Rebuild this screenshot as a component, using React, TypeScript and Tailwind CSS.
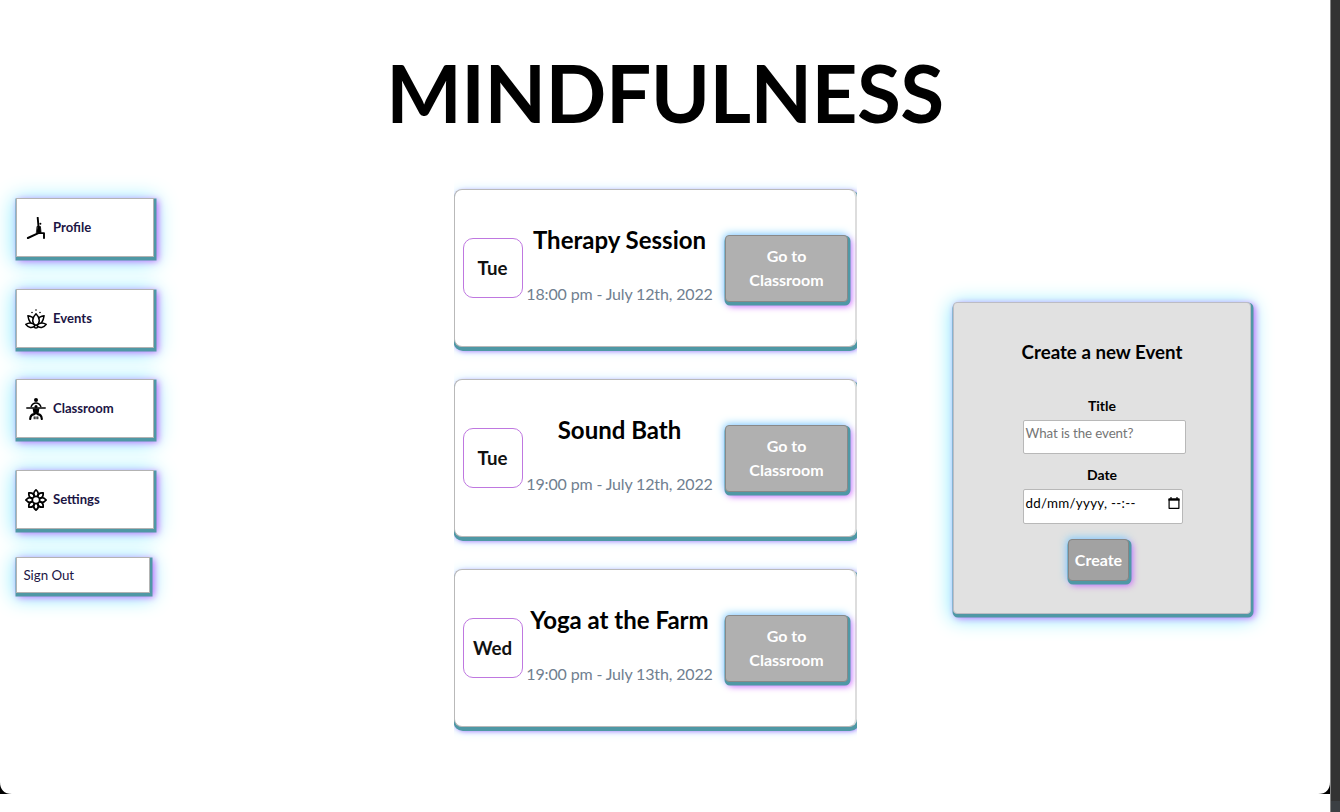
import type { ReactNode } from "react";

const glow =
  "shadow-[1px_2px_0_1.5px_#4f98a5,3px_3px_7px_1px_#c766ff,0_3px_20px_2px_#84ecff]";
const buttonGlow =
  "shadow-[1px_2px_0_1.5px_#4f98a5,-1px_-1px_9px_0px_#78d0ff,3px_4px_7px_0px_#d050ff]";

function ProfileIcon() {
  return (
    <svg viewBox="0 0 22 22" className="h-[22px] w-[22px] shrink-0" fill="none" stroke="#000" strokeLinecap="round" strokeLinejoin="round">
      <path d="M12.7 .7l.8 9" strokeWidth="1.9" />
      <path d="M12.4 9.4h3l.7 6.4h-4.4z" fill="#000" strokeWidth=".8" />
      <circle cx="15.4" cy="6.8" r="1" fill="#000" stroke="none" />
      <path d="M2.9 21l10.5-4.8" strokeWidth="2" />
      <path d="M13.8 16.1h5.2v5" strokeWidth="1.9" />
    </svg>
  );
}

function LotusIcon() {
  return (
    <svg viewBox="0 0 22 22" className="h-[22px] w-[22px] shrink-0" fill="#fff" stroke="#000" strokeWidth="1.5" strokeLinejoin="round">
      <path d="M10.5 18.3C6.6 17 3.7 14 2.9 7.7c3.3.2 5.7 2 7.4 5zM11.5 18.3c3.9-1.3 6.8-4.3 7.6-10.6-3.3.2-5.7 2-7.4 5z" />
      <path d="M11 18.4c-4.4-3.4-4.4-8.3 0-12.6 4.4 4.3 4.4 9.2 0 12.6z" />
      <path d="M10.3 17.6C7.5 14.6 4 14.3.8 16.4c2.4 3.5 6.5 4.2 9.5 1.2zM11.7 17.6c2.8-3 6.3-3.3 9.5-1.2-2.4 3.5-6.5 4.2-9.5 1.2z" />
      <circle cx="11" cy="18.5" r="1.6" />
      <g fill="#000" stroke="none">
        <circle cx="11" cy="2" r=".8" />
        <circle cx="7" cy="4.5" r=".8" />
        <circle cx="15" cy="4.5" r=".8" />
      </g>
    </svg>
  );
}

function ClassroomIcon() {
  return (
    <svg viewBox="0 0 22 22" className="h-[22px] w-[22px] shrink-0" fill="none" stroke="#000" strokeLinecap="round" strokeLinejoin="round">
      <circle cx="11" cy="2.1" r="2" fill="#000" stroke="none" />
      <path d="M1.8 10h18.4" strokeWidth="1.5" />
      <path d="M6.2 8.5c1-2.4 2.6-3.4 4.8-3.4s3.8 1 4.8 3.4" strokeWidth="1.5" />
      <circle cx="11" cy="8.4" r="1.5" fill="#000" stroke="none" />
      <path d="M7.6 10.5h6.8l-1 6H8.600z" fill="#000" stroke="none" />
      <path d="M9 16.3C6.400 16.300 5.400 18 5.200 21M13 16.300c2.600 0 3.600 1.700 3.800 4.700" strokeWidth="2.2" />
      <path d="M9.200 18.800v2M11 18.800v2M12.800 18.800v2" strokeWidth="1.1" />
    </svg>
  );
}

function FlowerIcon() {
  return (
    <svg viewBox="0 0 22 22" className="h-[22px] w-[22px] shrink-0" fill="none" stroke="#000" strokeWidth="1.8" strokeLinejoin="round">
      {[0, 45, 90, 135, 180, 225, 270, 315].map((angle) => (
        <path
          key={angle}
          transform={`rotate(${angle} 11 11)`}
          d="M9.5 7.2C7.8 4.8 8.9 2.6 11 .9c2.1 1.7 3.2 3.9 1.5 6.3"
        />
      ))}
      <circle cx="11" cy="11" r="3.7" />
    </svg>
  );
}

function CalendarIcon() {
  return (
    <svg viewBox="0 0 12 12" className="h-3 w-3" fill="none" stroke="#000">
      <path d="M1.1 2h9.8v9.3H1.1z" strokeWidth="1.2" strokeLinejoin="round" />
      <path d="M.5 2.6h11" strokeWidth="2.2" />
      <path d="M3 0v2M9 0v2" strokeWidth="1.2" />
    </svg>
  );
}

const links: { label: string; icon: ReactNode }[] = [
  { label: "Profile", icon: <ProfileIcon /> },
  { label: "Events", icon: <LotusIcon /> },
  { label: "Classroom", icon: <ClassroomIcon /> },
  { label: "Settings", icon: <FlowerIcon /> },
];

const events = [
  { day: "Tue", title: "Therapy Session", time: "18:00 pm - July 12th, 2022" },
  { day: "Tue", title: "Sound Bath", time: "19:00 pm - July 12th, 2022" },
  { day: "Wed", title: "Yoga at the Farm", time: "19:00 pm - July 13th, 2022" },
];

function Sidebar() {
  return (
    <nav className="mt-[9.5px] ml-4 flex w-[138px] shrink-0 flex-col text-[#1c1544]">
      {links.map(({ label, icon }) => (
        <a
          key={label}
          className={`mb-[31.5px] flex h-[59px] w-[138px] items-center gap-[6px] border border-[#b3b3b3] bg-white pt-[1.5px] pl-2 text-[13.1px] font-bold ${glow}`}
        >
          {icon}
          {label}
        </a>
      ))}
      <button
        className={`-mt-[3px] flex h-9 w-[134px] items-center border border-[#b3b3b3] bg-white pt-[2px] pl-[6.5px] text-[13.33px] tracking-[-0.05px] ${glow}`}
      >
        Sign Out
      </button>
    </nav>
  );
}

function EventCard({ day, title, time }: (typeof events)[number]) {
  return (
    <li className="h-[190px] overflow-x-clip">
      <article className="flex h-[158px] w-[403px] items-center rounded-lg border border-r-2 border-[#b9b9b9] border-r-[#dddddd] bg-white pl-2 shadow-[1px_2.5px_0_1.5px_#4f98a5,2px_3px_5px_1px_#9c70ff,0_2px_12px_1px_#c9f0ff]">
        <div className="flex h-[60px] w-[60px] items-center justify-center rounded-[10px] border border-[#bf78e0] pt-[2px] pr-px text-[18.7px] font-bold text-[#111]">
          {day}
        </div>
        <div className="flex w-[194px] flex-col items-center pr-px pb-1 whitespace-nowrap">
          <h2 className="text-2xl leading-[30px] font-bold">{title}</h2>
          <p className="mt-[27px] text-base leading-6 tracking-[-0.15px] text-[#708090]">{time}</p>
        </div>
        <button
          className={`relative top-px ml-2 h-[67px] w-[123px] shrink-0 rounded border border-[#898989] bg-[#b0b0b0] px-4 pb-[2px] text-base leading-6 font-bold text-white ${buttonGlow}`}
        >
          Go to Classroom
        </button>
      </article>
    </li>
  );
}

function EventForm() {
  return (
    <form
      className={`mt-[113px] ml-[96px] flex h-[312px] w-[298px] shrink-0 flex-col items-center rounded border border-[#bcbcc4] bg-[#e1e1e1] ${glow}`}
    >
      <h3 className="mt-[37px] text-[18.72px] leading-6 font-bold">Create a new Event</h3>
      <label className="mt-[32px] text-[14px] leading-5 font-bold">Title</label>
      <div className="mt-[4px] ml-1 flex h-[34px] w-[163px] rounded-[2px] border border-[#b8b8b8] bg-white pt-[2px] pl-[2px] text-[13.33px] leading-5 tracking-[-0.1px] text-[#757575]">
        What is the event?
      </div>
      <label className="mt-[11px] text-[14px] leading-5 font-bold">Date</label>
      <div className="mt-[4px] ml-[2px] flex h-[35px] w-[160px] justify-between rounded-[2px] border border-[#b8b8b8] bg-white pt-[3px] pr-[2px] pl-[1.5px] text-[13.33px] leading-5">
        <span className="tracking-[0.3px]">dd/mm/yyyy, --:--</span>
        <span className="pt-[4px]">
          <CalendarIcon />
        </span>
      </div>
      <button
        className={`mt-[15px] mr-[7px] h-[42px] w-[61px] rounded border border-[#858585] bg-[#a2a2a2] text-base font-bold text-white ${buttonGlow}`}
      >
        Create
      </button>
    </form>
  );
}

export default function App() {
  return (
    <div className="flex h-[812px] w-[1340px] overflow-hidden bg-white font-['Lato',sans-serif] text-black">
      <div className="relative w-[1330px]">
        <h1 className="pt-[44px] pb-px text-center text-[80px] leading-[96px] font-bold tracking-[-0.55px]">MINDFULNESS</h1>
        <main className="mt-[47.5px] flex items-start">
          <Sidebar />
          <ul className="ml-[300px] w-[403px] shrink-0">
            {events.map((event) => (
              <EventCard key={event.title} {...event} />
            ))}
          </ul>
          <EventForm />
        </main>
        <svg viewBox="0 0 12 12" className="absolute top-[782px] left-0 h-3 w-3">
          <path d="M0 0c0 7.5 4 12 12 12H0z" fill="#000" />
        </svg>
        <svg viewBox="0 0 12 12" className="absolute top-[782px] right-0 h-3 w-3">
          <path d="M12 0c0 7.5-4 12-12 12h12z" fill="#000" />
        </svg>
      </div>
      <div className="flex w-[10px] flex-col border-l border-[#858585] bg-[#333]">
        <div className="mt-auto h-[11px] bg-[#3b3f43]" />
      </div>
    </div>
  );
}
